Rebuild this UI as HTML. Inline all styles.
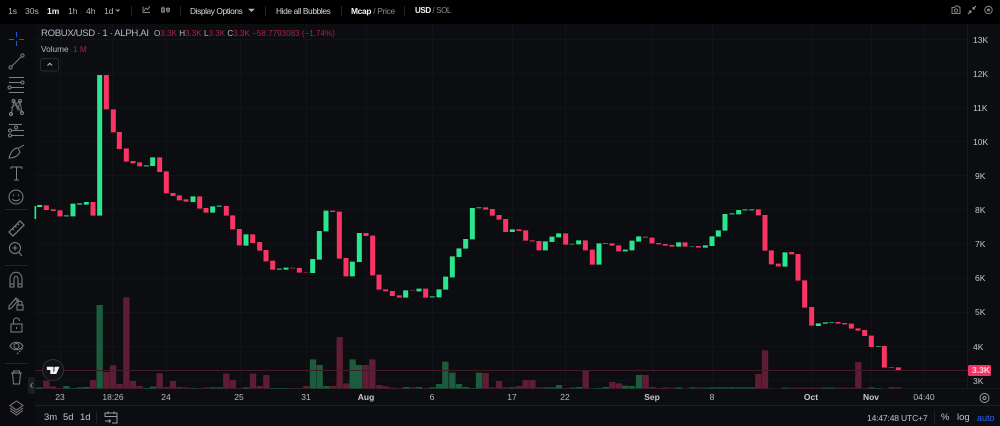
<!DOCTYPE html>
<html><head><meta charset="utf-8"><style>
html,body{margin:0;padding:0;background:#000}
#r{position:relative;width:1000px;height:426px;overflow:hidden;background:#0c0d11;font-family:"Liberation Sans",sans-serif;color:#c8c9cc}
.t{position:absolute;white-space:nowrap;line-height:12px}
.top{top:5px;font-size:8.5px;color:#b4b5b8}
.b{color:#f2f2f2;font-weight:bold}
.y{left:973px;font-size:8.5px;color:#c4c5c8}
.x{top:391px;font-size:8.5px;color:#b8b9bc;transform:translateX(-50%)}
.bt{top:412px;font-size:9.5px;color:#c0c1c4}
.o{color:#b01e46}
svg{position:absolute;left:0;top:0}
</style></head><body><div id="r">
<div style="position:absolute;left:0;top:0;width:1000px;height:24px;background:#000"></div>
<div style="position:absolute;left:0;top:24px;width:35px;height:402px;background:#0a0b0e"></div>
<svg width="1000" height="426" viewBox="0 0 1000 426">
<path fill="none" stroke="#121318" stroke-width="1" d="M35 39.500H967M35 73.500H967M35 107.500H967M35 141.500H967M35 175.500H967M35 209.500H967M35 243.500H967M35 278.500H967M35 312.500H967M35 346.500H967M35 380.500H967M60.500 24V388M112.500 24V388M166.500 24V388M240.500 24V388M306.500 24V388M366.500 24V388M432.500 24V388M512.500 24V388M565.500 24V388M652.500 24V388M712.500 24V388M811.500 24V388M871.500 24V388M924.500 24V388"/>
<path stroke="#17181d" stroke-width="1" d="M967.500 24V388M35 388.500H1000"/>
<path stroke="#1e1f24" stroke-width="1" d="M35 405.500H1000"/>
<!-- volume -->
<g transform="translate(30,290) scale(.33333)" stroke-width="19" fill="none">
<path stroke="#1b5c3c" d="M28 296V292M109 296V288M129 296V294M149 296V292M169 296V291M209 296V45M349 296V294M369 296V290M489 296V294M549 296V292M569 296V292M649 296V292M729 296V294M749 296V294M769 296V294M849 296V208M869 296V225M889 296V288"/>
<path stroke="#5e1d33" d="M49 296V272M69 296V289M89 296V294M189 296V270M229 296V246M249 296V226M269 296V282M289 296V22M309 296V273M329 296V288M389 296V250M409 296V291M429 296V273M449 296V291M469 296V292M509 296V294M529 296V292M589 296V251M609 296V270M629 296V294M669 296V251M689 296V288M709 296V255M789 296V294M809 296V294M829 296V288M909 296V288M929 296V141M949 296V280"/>
</g>
<g transform="translate(340,330) scale(.33333)" stroke-width="19" fill="none">
<path stroke="#1b5c3c" d="M38 176V88M57 176V105M198 176V171M237 176V171M277 176V172M297 176V162M316 176V95M337 176V128M357 176V162M377 176V171M397 176V174M417 176V128M517 176V172M617 176V172M637 176V172M657 176V165M697 176V173M717 176V171M757 176V175M777 176V174M797 176V171M856 176V167M876 176V168M897 176V135"/>
<path stroke="#5e1d33" d="M77 176V105M97 176V88M118 176V165M137 176V169M157 176V173M177 176V174M218 176V172M257 176V174M437 176V129M457 176V172M477 176V153M497 176V172M537 176V168M557 176V150M577 176V150M597 176V172M677 176V174M737 176V120M817 176V156M837 176V160M917 176V135M937 176V171M957 176V174M977 176V172"/>
</g>
<g transform="translate(660,330) scale(.33333)" stroke-width="19" fill="none">
<path stroke="#1b5c3c" d="M57 176V172M97 176V172M137 176V173M157 176V172M177 176V172M197 176V172M217 176V172M237 176V172M257 176V172M277 176V172M375 176V173M495 176V173M515 176V173M635 176V172M655 176V174"/>
<path stroke="#5e1d33" d="M37 176V173M77 176V175M117 176V172M295 176V132M315 176V61M335 176V175M355 176V175M395 176V173M415 176V173M435 176V173M455 176V173M475 176V173M535 176V173M555 176V173M575 176V173M595 176V96M615 176V174M675 176V175M695 176V171M715 176V172"/>
</g>
<path d="M35 370.500H967" stroke="#451a2a" stroke-width="1"/>
<!-- candles -->
<g transform="translate(30,60) scale(.33333)" stroke-width="15" fill="none">
<path stroke="#2be58f" stroke-width="5" d="M16 438V477"/>
<path stroke="#2be58f" d="M29 435V441M129 431V469M169 426V434M209 45V467M368 292V318M489 409V426M548 439V458M648 523V557"/>
<path stroke="#1f8f5c" d="M109 465V470M149 429V435M349 315V320M568 436V441"/>
<path stroke="#fb3466" d="M49 436V450M70 448V453M90 451V469M189 426V467M229 45V148M250 148V217M268 216V267M289 265V305M309 303V310M329 307V319M389 292V336M409 334V400M429 399V408M448 406V421M468 418V425M509 409V446M528 444V458M589 438V467M608 466V508M628 507V556M668 523V549M689 546V572M708 570V604"/>
</g>
<g transform="translate(260,190) scale(.33333)" stroke-width="15" fill="none">
<path stroke="#2be58f" d="M78 233V239M158 207V249M178 123V209M198 62V124M277 215V259M298 129V216M437 301V323M477 296V304M537 298V322M557 260V299M577 199V262M597 175V201M617 147V176M637 54V148"/>
<path stroke="#1f8f5c" d="M58 235V240M517 318V323M657 51V55"/>
<path stroke="#fb3466" d="M38 212V239M118 234V248M218 62V66M238 65V206M258 204V259M318 129V138M338 137V256M357 254V299M377 298V304M397 303V318M418 316V323M497 296V323M677 52V59M697 57V77M717 75V89"/>
<path stroke="#a0244a" d="M98 233V236M138 246V248M457 300V302"/>
</g>
<g transform="translate(490,190) scale(.33333)" stroke-width="15" fill="none">
<path stroke="#2be58f" d="M67 118V126M166 154V181M186 140V156M206 130V142M266 151V163M327 160V224M406 179V184M426 152V181M446 139V155M566 157V170M646 166V173M666 139V168M685 121V140M705 72V122"/>
<path stroke="#1f8f5c" d="M246 161V164M346 159V162M605 168V170"/>
<path stroke="#fb3466" d="M47 87V126M87 118V123M107 121V152M147 153V181M227 130V164M286 151V181M307 179V224M366 160V167M386 166V184M486 143V160M506 159V163M526 162V167M546 165V170M585 157V170M625 168V173"/>
<path stroke="#a0244a" d="M127 150V155M466 140V144"/>
</g>
<g transform="translate(720,190) scale(.33333)" stroke-width="15" fill="none">
<path stroke="#2be58f" d="M56 60V73M195 187V230M295 400V408M316 397V401"/>
<path stroke="#1f8f5c" d="M36 69V74M75 57V62M95 57V62M334 396V399M475 468V471"/>
<path stroke="#fb3466" d="M115 58V76M135 75V182M154 181V223M175 221V229M215 186V193M234 192V272M254 271V353M275 351V407M354 396V401M374 399V403M394 401V416M414 415V422M434 420V438M454 437V471M493 468V533M535 532V540"/>
<path stroke="#a0244a" d="M514 531V534"/>
</g>
<!-- toolbar separators -->
<path stroke="#232429" stroke-width="1" d="M5 209.500H28M5 265.500H28M5 363.500H28M131.500 6V16M180.500 6V16M265.500 6V16M341.500 6V16M404.500 6V16M96.500 411V423M934.500 411V423"/>
<!-- left icons -->
<g fill="none" stroke="#808186" stroke-width="1">
<path stroke="#2158d8" d="M16.500 32V37M16.500 41V46M9 39.500H14M19 39.500H24"/>
<path d="M12 66L21 57"/><circle cx="10.500" cy="67.500" r="1.600"/><circle cx="22.500" cy="55.500" r="1.600"/>
<path d="M9 77.500H24M9 82.500H21M11 87.500H24M9 92.500H24" stroke-width="1"/><circle cx="22.500" cy="82.500" r="1.500"/><circle cx="9.500" cy="87.500" r="1.500"/>
<path d="M11 115L14 101L18 110L20 101L22 113M11 108L20 101M14 101L22 113" stroke="#707176"/><circle cx="13.500" cy="101" r="1.500"/><circle cx="20" cy="101" r="1.500"/><circle cx="11" cy="114" r="1.500"/><circle cx="22" cy="113" r="1.500"/>
<path d="M9 124.500H22M12 130.500H24M12 135.500H24"/><circle cx="10" cy="130.500" r="1.500"/><circle cx="10" cy="135.500" r="1.500"/><circle cx="16" cy="127.500" r="1.500"/>
<path d="M9 158C11 151 14 148 18 148L20 152C18 156 14 158 9 158ZM19 148L24 145"/>
<path d="M11 167H22M16.500 167V180M14 180H19M11 167V169M22 167V169"/>
<circle cx="16" cy="197" r="7"/><path d="M12.500 199C14 201.500 18 201.500 19.500 199"/><path d="M13.500 194.500V196M18.500 194.500V196"/>
<path d="M9 232L20 221L24 225L13 236ZM12.500 228.500L14 230M15 226L16.500 227.500M17.500 223.500L19 225" stroke-width="1.200"/>
<circle cx="15" cy="248" r="5.500"/><path d="M19 252.500L22 256M12.500 248H17.500M15 245.500V250.500"/>
<path d="M10 287V279C10 270 22 270 22 279V287H18V279C18 275.500 14 275.500 14 279V287ZM10 284H14M18 284H22"/>
<path d="M9 306L16 298L18.500 300L11.500 308L9 309ZM15 299L17.500 301"/><rect x="17" y="305" width="6" height="5"/><path d="M18 305V303C18 300.500 22 300.500 22 303V305"/>
<rect x="11" y="324" width="11" height="8"/><path d="M13.500 324V321C13.500 317 19.500 317 19.500 321"/><path d="M16.500 327V329"/>
<path d="M10 346C13 341 20 341 23 346C20 351 13 351 10 346Z"/><circle cx="16.500" cy="346" r="2.500"/><path d="M17 354L23 348" stroke-dasharray="2 1"/>
<path d="M11 373H22M13.500 373V371H19.500V373M12.500 373L13.500 384H19.500L20.500 373"/>
<path d="M16.500 401L23 405.500L16.500 410L10 405.500ZM10 408L16.500 412.500L23 408M10 410.500L16.500 415L23 410.500"/>
</g>
<rect x="28" y="377" width="7" height="17" rx="2" fill="#1c1d22"/><path d="M32.500 383L30.500 385.500L32.500 388" stroke="#a0a1a6" fill="none" stroke-width=".8"/>
<!-- top icons -->
<g fill="none" stroke="#83848a" stroke-width="1">
<path d="M143 6.500V12.500H150M144 11L146 8L147.500 9.500L150 6.500"/>
<path d="M163 6.500V13M161.500 8H164.500V12H161.500ZM168 7V13M166.500 8.500H169.500V11H166.500Z"/>
<path d="M952 7.500H954.500L955.500 6H958.500L959.500 7.500H960V13.500H952Z"/><circle cx="956" cy="10.500" r="1.600"/>
<path d="M968 14L971 11M971 13V11H969M976 6L973 9M973 7V9H975" stroke="#9a9ba0"/>
<circle cx="988.500" cy="10" r="3.700"/><circle cx="988.500" cy="10" r="1" fill="#83848a"/>
</g>
<path d="M115 9.500H120.500L117.700 12Z" fill="#8b8c90"/>
<path d="M248 8.800H255L251.500 12Z" fill="#b0b1b5"/>
<!-- collapse button -->
<rect x="40.500" y="58.500" width="18" height="12.500" rx="2" fill="#0c0d11" stroke="#292a2f"/>
<path d="M47.500 65.500L49.800 63.300L52 65.500" fill="none" stroke="#c8c9cc" stroke-width="1"/>
<!-- TV logo -->
<circle cx="53" cy="370" r="10.500" fill="#111216" stroke="#303136"/>
<path d="M46.800 366.800H53.500V374H50.300V370H46.800Z" fill="#f2f2f2"/>
<circle cx="55.800" cy="368.400" r="1.600" fill="#f2f2f2"/>
<path d="M59.500 366.800L56.300 374H53L56 366.800Z" fill="#f2f2f2"/>
<!-- price tag -->
<rect x="968" y="365" width="23" height="11" rx="1.500" fill="#f23465"/>
<!-- settings bottom -->
<g fill="none" stroke="#9a9ba0"><circle cx="984.500" cy="398" r="4.500"/><circle cx="984.500" cy="398" r="1.500"/>
<path d="M105 417V413H117V423H112M105 416.500H117M108 411.500V414M114 411.500V414M105 421H110.500M109 419.500L110.500 421L109 422.500"/></g>
</svg>

<span class="t top" style="left:8px">1s</span>
<span class="t top" style="left:25px">30s</span>
<span class="t top b" style="left:47px">1m</span>
<span class="t top" style="left:68px">1h</span>
<span class="t top" style="left:86px">4h</span>
<span class="t top" style="left:104px">1d</span>
<span class="t top" style="left:190px;color:#d8d9dc;font-size:8.4px;letter-spacing:-.42px">Display Options</span>
<span class="t top" style="left:276px;color:#d8d9dc;font-size:8.4px;letter-spacing:-.38px">Hide all Bubbles</span>
<span class="t top" style="left:351px;font-size:8.4px;letter-spacing:-.3px"><span class="b">Mcap</span> <span style="color:#8c8d91">/ Price</span></span>
<span class="t top" style="left:415px;font-size:8px;letter-spacing:-.4px"><span class="b">USD</span> <span style="color:#8c8d91">/ SOL</span></span>

<span class="t" style="left:41px;top:28px;font-size:9.6px;letter-spacing:-.35px;color:#b8b9bc">ROBUX/USD · 1 · ALPH.AI</span>
<span class="t" style="left:154px;top:28px;font-size:8.1px;color:#b8b9bc">O<span class="o">3.3K</span> H<span class="o">3.3K</span> L<span class="o">3.3K</span> C<span class="o">3.3K</span> <span class="o">−58.7793083 (−1.74%)</span></span>
<span class="t" style="left:41px;top:43px;font-size:8.3px;color:#b8b9bc">Volume</span>
<span class="t o" style="left:73px;top:43px;font-size:8.3px">1 M</span>

<span class="t y" style="top:34px">13K</span>
<span class="t y" style="top:68px">12K</span>
<span class="t y" style="top:102px">11K</span>
<span class="t y" style="top:136px">10K</span>
<span class="t y" style="top:170px;left:975px">9K</span>
<span class="t y" style="top:204px;left:975px">8K</span>
<span class="t y" style="top:238px;left:975px">7K</span>
<span class="t y" style="top:272px;left:975px">6K</span>
<span class="t y" style="top:306px;left:975px">5K</span>
<span class="t y" style="top:341px;left:973px">4K</span>
<span class="t y" style="top:375px;left:973px">3K</span>
<span class="t" style="left:972px;top:364px;font-size:8.5px;color:#f6d4dc;font-weight:bold">3.3K</span>

<span class="t x" style="left:60px">23</span>
<span class="t x" style="left:113px">18:26</span>
<span class="t x" style="left:166px">24</span>
<span class="t x" style="left:239px">25</span>
<span class="t x" style="left:306px">31</span>
<span class="t x" style="left:366px;color:#c8c9cc;font-weight:bold">Aug</span>
<span class="t x" style="left:432px">6</span>
<span class="t x" style="left:512px">17</span>
<span class="t x" style="left:565px">22</span>
<span class="t x" style="left:652px;font-weight:bold;color:#c8c9cc">Sep</span>
<span class="t x" style="left:712px">8</span>
<span class="t x" style="left:811px;font-weight:bold;color:#c8c9cc">Oct</span>
<span class="t x" style="left:871px;font-weight:bold;color:#c8c9cc">Nov</span>
<span class="t x" style="left:924px">04:40</span>

<span class="t bt" style="left:44px">3m</span>
<span class="t bt" style="left:63px">5d</span>
<span class="t bt" style="left:80px">1d</span>
<span class="t bt" style="left:867px;font-size:8.6px;letter-spacing:-.2px">14:47:48 UTC+7</span>
<span class="t bt" style="left:941px">%</span>
<span class="t bt" style="left:957px">log</span>
<span class="t bt" style="left:977px;font-size:9px;color:#2962ff">auto</span>
</div></body></html>
